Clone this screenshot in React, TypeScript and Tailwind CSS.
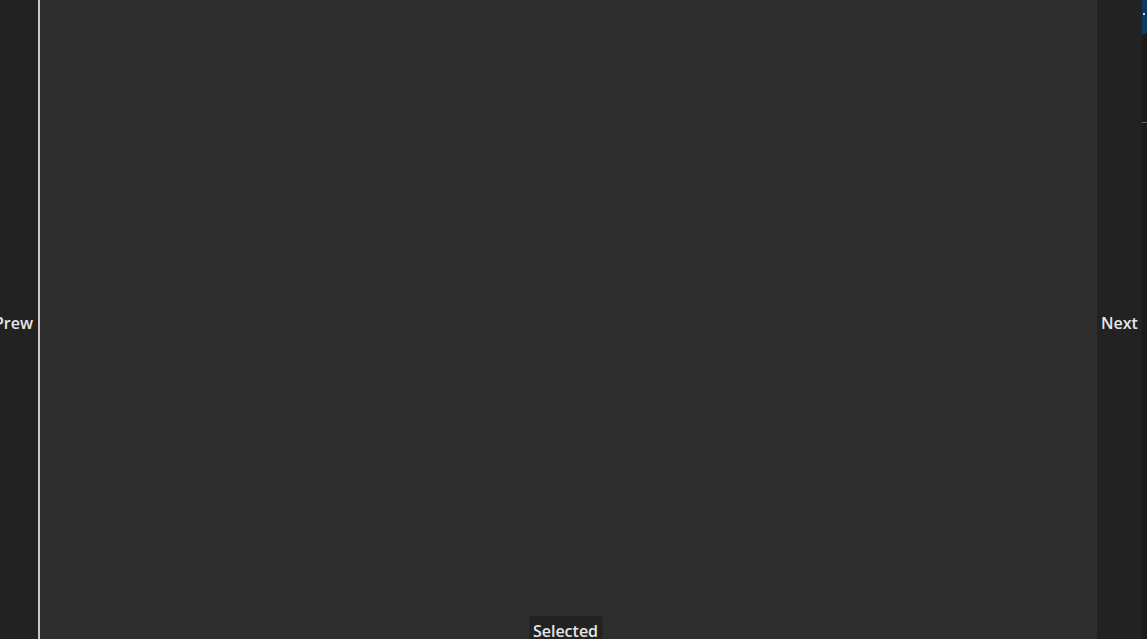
import React from "react";

export default function App() {
  return (
    <div
      className="relative flex h-[639px] w-full overflow-hidden bg-[#2e2e2e] text-[16px] font-semibold text-[#e6e6e6]"
      style={{ fontFamily: '"Open Sans", "Noto Sans", sans-serif' }}
    >
      <div className="flex w-[38px] shrink-0 items-center justify-end bg-[#222222] pr-[5px] pt-[7px]">
        <span className="whitespace-nowrap">Prew</span>
      </div>
      <div className="w-[2px] shrink-0 bg-[#c9c9c9]" />
      <div className="relative flex-1 bg-[#2e2e2e]">
        <div className="absolute bottom-[-20px] left-1/2 -translate-x-[calc(50%+3px)] rounded-t-[3px] bg-[#222222] px-[4px] pt-[3px] pb-[16px] leading-[24px]">
          Selected
        </div>
      </div>
      <div className="flex w-[45px] shrink-0 items-center justify-center bg-[#222222] pt-[7px]">
        <span className="whitespace-nowrap">Next</span>
      </div>
      <div className="flex w-[5px] shrink-0 flex-col bg-[#1b1b1b]">
        <div className="relative h-[34px] bg-[#0c3a62]">
          <div className="absolute left-[1px] top-[13px] h-[2px] w-[2px] bg-[#d0d0d0]" />
        </div>
        <div className="h-[88px]" />
        <div className="h-[1px] bg-[#6a6a6a]" />
      </div>
    </div>
  );
}
